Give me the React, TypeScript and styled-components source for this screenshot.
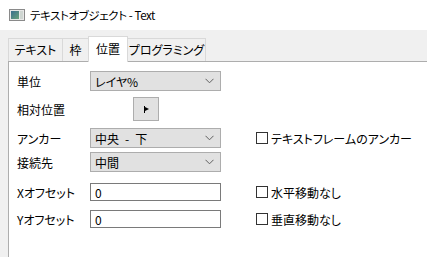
import styled, { createGlobalStyle } from 'styled-components';

const GlobalStyle = createGlobalStyle`
    html, body {
        margin: 0;
        padding: 0;
    }
    body {
        width: 427px;
        height: 257px;
        overflow: hidden;
        background: #f0f0f0;
        font-family: "Noto Sans CJK JP", "Noto Sans", sans-serif;
        font-size: 12px;
        font-feature-settings: "palt";
        color: #000;
    }
`;

function AppIcon() {
    return (
        <svg width="16" height="12" viewBox="0 0 16 12">
            <defs>
                <linearGradient id="g" x1="0" y1="0" x2="1" y2="1">
                    <stop offset="0" stopColor="#3b6f8f" />
                    <stop offset="1" stopColor="#6aa37c" />
                </linearGradient>
            </defs>
            <rect x="0.5" y="0.5" width="15" height="11" fill="#e8e8e8" stroke="#8a8a8a" />
            <rect x="2" y="2" width="8" height="8" fill="url(#g)" />
            <rect x="11" y="2" width="3" height="8" fill="#cfd6d2" />
        </svg>
    );
}

function Chevron() {
    return (
        <svg width="9" height="6" viewBox="0 0 9 6">
            <path d="M0.5 0.8 L4.5 4.8 L8.5 0.8" fill="none" stroke="#606060" strokeWidth="1" />
        </svg>
    );
}

function PickIcon() {
    return (
        <svg width="5" height="7" viewBox="0 0 5 7">
            <rect x="0" y="0" width="1" height="7" fill="#000" />
            <path d="M1 1 L5 3 L1 5 Z" fill="#000" />
        </svg>
    );
}

function App() {
    return (
        <>
            <GlobalStyle />
            <Window>
                <TitleBar>
                    <AppIcon />
                    <Title>テキストオブジェクト - Text</Title>
                </TitleBar>
                <Body>
                    <TabStrip>
                        <Tab $w={55}>テキスト</Tab>
                        <Tab $w={27}>枠</Tab>
                        <Tab $w={40} $active>位置</Tab>
                        <Tab $w={79}>プログラミング</Tab>
                    </TabStrip>
                    <Panel>
                        <Row $mt={0}>
                            <Label>単位</Label>
                            <Select>
                                <span>レイヤ%</span>
                                <Chevron />
                            </Select>
                        </Row>
                        <Row $mt={6} $h={24}>
                            <Label>相対位置</Label>
                            <PickButton>
                                <PickIcon />
                            </PickButton>
                        </Row>
                        <Row $mt={7}>
                            <Label>アンカー</Label>
                            <Select>
                                <span>中央{'\u2002'}-{'\u2002'}下</span>
                                <Chevron />
                            </Select>
                            <Check>
                                <Box />
                                テキストフレームのアンカー
                            </Check>
                        </Row>
                        <Row $mt={4}>
                            <Label>接続先</Label>
                            <Select>
                                <span>中間</span>
                                <Chevron />
                            </Select>
                        </Row>
                        <Row $mt={10}>
                            <Label>Xオフセット</Label>
                            <Field readOnly value="0" />
                            <Check>
                                <Box />
                                水平移動なし
                            </Check>
                        </Row>
                        <Row $mt={7}>
                            <Label>Yオフセット</Label>
                            <Field readOnly value="0" />
                            <Check>
                                <Box />
                                垂直移動なし
                            </Check>
                        </Row>
                    </Panel>
                </Body>
            </Window>
        </>
    );
}

const Window = styled.div`
    width: 427px;
    height: 257px;
    display: flex;
    flex-direction: column;
`;

const TitleBar = styled.div`
    height: 30px;
    flex: none;
    background: #fff;
    display: flex;
    align-items: center;
    gap: 5px;
    padding-left: 9px;
`;

const Title = styled.span`
    font-size: 11.5px;
    letter-spacing: -0.4px;
    line-height: 1;
    margin-top: 1px;
`;

const Body = styled.div`
    flex: 1;
    display: flex;
    flex-direction: column;
    padding: 6px 0 0 8px;
`;

const TabStrip = styled.div`
    height: 26px;
    display: flex;
    align-items: flex-end;
    position: relative;
    z-index: 1;
`;

const Tab = styled.div<{ $w: number; $active?: boolean }>`
    box-sizing: border-box;
    width: ${p => p.$w}px;
    height: ${p => (p.$active ? 26 : 23)}px;
    margin-bottom: ${p => (p.$active ? 0 : 1)}px;
    margin-right: -1px;
    border: 1px solid #d9d9d9;
    border-bottom: none;
    background: ${p => (p.$active ? '#fff' : '#f0f0f0')};
    display: flex;
    align-items: center;
    justify-content: center;
    padding-bottom: ${p => (p.$active ? 2 : 1)}px;
    white-space: nowrap;
    position: relative;
    z-index: ${p => (p.$active ? 2 : 1)};
`;

const Panel = styled.div`
    flex: 1;
    margin-top: -1px;
    background: #fff;
    border-top: 1px solid #adadad;
    border-left: 1px solid #adadad;
    padding: 9px 0 0 8px;
`;

const Row = styled.div<{ $mt: number; $h?: number }>`
    display: flex;
    align-items: center;
    height: ${p => p.$h ?? 20}px;
    margin-top: ${p => p.$mt}px;
`;

const Label = styled.div`
    width: 73px;
    flex: none;
    white-space: nowrap;
`;

const Select = styled.div`
    box-sizing: border-box;
    width: 131px;
    height: 20px;
    flex: none;
    background: #e1e1e1;
    border: 1px solid #adadad;
    display: flex;
    align-items: center;
    justify-content: space-between;
    padding: 0 6px 0 4px;
`;

const PickButton = styled.div`
    box-sizing: border-box;
    width: 26px;
    height: 24px;
    margin-left: 43px;
    background: #e1e1e1;
    border: 1px solid #adadad;
    display: flex;
    align-items: center;
    justify-content: center;
`;

const Field = styled.input`
    box-sizing: border-box;
    width: 131px;
    height: 18px;
    flex: none;
    margin: 0;
    border: 1px solid #7a7a7a;
    background: #fff;
    padding: 0 4px;
    font: inherit;
    font-size: 12px;
    color: #000;
    outline: none;
`;

const Check = styled.div`
    display: flex;
    align-items: center;
    gap: 3px;
    margin-left: 35px;
    white-space: nowrap;
`;

const Box = styled.span`
    box-sizing: border-box;
    width: 12px;
    height: 12px;
    border: 1px solid #333;
    background: #fff;
    flex: none;
`;

export default App;
